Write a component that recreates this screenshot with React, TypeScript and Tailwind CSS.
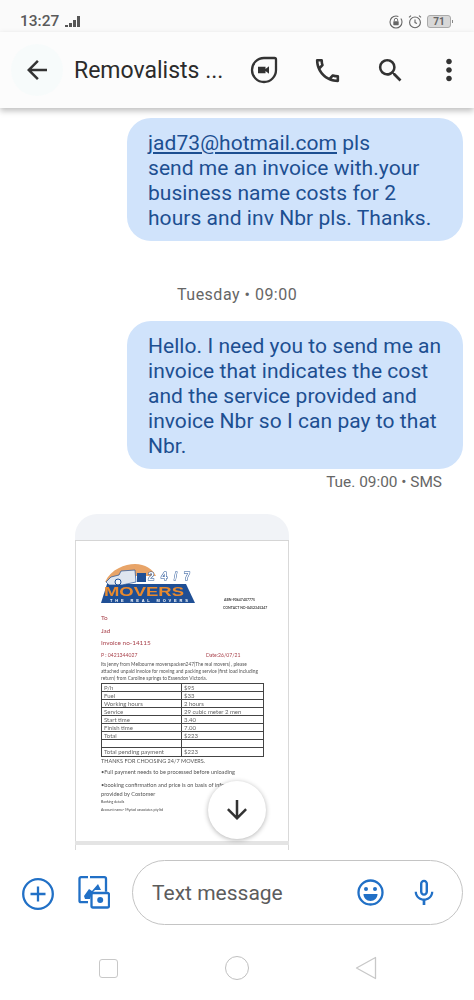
import { MdArrowBack, MdArrowDownward, MdMicNone, MdMoreVert, MdOutlineCall, MdSearch } from 'react-icons/md';

const tableRows = [
  ['P/h', '$95'],
  ['Fuel', '$33'],
  ['Working hours', '2 hours'],
  ['Service', '29 cubic meter 2 men'],
  ['Start time', '3.40'],
  ['Finish time', '7.00'],
  ['Total', '$223'],
  ['', ''],
  ['Total pending payment', '$223'],
];

function StatusBar() {
  return (
    <div className="flex h-[32px] items-end justify-between bg-[#fafafa] pl-[20px] pr-[21px] pb-[1px] text-[#5a5a5a]">
      <div className="flex items-end gap-[6px]">
        <span className="text-[15.500px] leading-[20px] font-medium">13:27</span>
        <div className="mb-[4px] flex items-end gap-[1.500px]">
          <span className="h-[2px] w-[2.500px] bg-[#555]" />
          <span className="h-[4px] w-[2.500px] bg-[#555]" />
          <span className="h-[7px] w-[2.500px] bg-[#555]" />
          <span className="h-[11px] w-[2.500px] bg-[#555]" />
        </div>
      </div>
      <div className="mb-[2px] flex items-center gap-[5px]">
        <svg width="14" height="14" viewBox="0 0 14 14" fill="none">
          <circle cx="7" cy="7" r="6" stroke="#666" strokeWidth="1.1" strokeDasharray="30 3" />
          <rect x="4.3" y="6.2" width="5.4" height="4" rx="0.6" fill="#666" />
          <path d="M5.3 6.2V5a1.7 1.7 0 0 1 3.4 0v1.2" stroke="#666" strokeWidth="0.9" />
        </svg>
        <svg width="14" height="15" viewBox="0 0 14 15" fill="none">
          <circle cx="7" cy="8.4" r="5.4" stroke="#666" strokeWidth="1.1" />
          <path d="M7 5.6v3l2 1M1 3.4 3 1.6M13 3.4l-2-1.8" stroke="#666" strokeWidth="1.1" />
        </svg>
        <div className="flex items-center">
          <div className="flex h-[13px] w-[24px] items-center justify-center rounded-[3px] border border-[#aaa] bg-[#d8d8d8] text-[10px] leading-none font-bold text-[#666]">
            71
          </div>
          <span className="ml-[1px] h-[3px] w-[1px] bg-[#888]" />
        </div>
      </div>
    </div>
  );
}

function Header() {
  return (
    <div className="relative z-10 flex h-[76px] items-center bg-[#fcfcfc] shadow-[0_3px_6px_rgba(0,0,0,0.25)]">
      <div className="ml-[11px] flex h-[52px] w-[52px] items-center justify-center rounded-full bg-[#f7fbfb]">
        <MdArrowBack size={30} color="#333" />
      </div>
      <div className="ml-[11px] mt-[1px] w-[158px] text-[23px] leading-[30px] text-[#2b2b2b]">Removalists ...</div>
      <svg className="ml-[18px]" width="28" height="28" viewBox="0 0 28 28" fill="none">
        <path d="M14 2h10.500A1.500 1.500 0 0 1 26 3.500V14A12 12 0 1 1 14 2z" stroke="#333" strokeWidth="2.300" />
        <path d="M8 10.800h7.500v2.100l3.500-2.600v7.400l-3.500-2.600v2.100H8z" fill="#333" />
      </svg>
      <MdOutlineCall className="ml-[34px]" size={31} color="#333" />
      <MdSearch className="ml-[32px]" size={31} color="#333" />
      <MdMoreVert className="ml-[26px]" size={34} color="#333" />
    </div>
  );
}

function Logo() {
  return (
    <svg width="94" height="40" viewBox="0 0 94 40" className="block">
      <path d="M4 18C10 5 24 0 34 0c10 0 18 5 21 12H30z" fill="#e8a468" />
      <path d="M0 39 6 20h79l9 19z" fill="#1f4f95" />
      <path d="M5 18 10 13l8-2 2-4 14-1 1 12-14 3H8z" fill="#dfe6f0" stroke="#1f4f95" strokeWidth="0.7" />
      <path d="M36 9h9v9h-9z" fill="#1f4f95" />
      <circle cx="17" cy="18" r="3" fill="#f3f6fa" stroke="#1f4f95" />
      <text x="47" y="16" fontFamily="'Liberation Sans', sans-serif" fontWeight="700" fontSize="11" fill="#ffffff" stroke="#1f4f95" strokeWidth="1" paintOrder="stroke" textLength="42">24/7</text>
      <text x="3" y="31.500" fontFamily="'Liberation Sans', sans-serif" fontWeight="700" fontSize="13.500" fill="#e98a2e" textLength="80" lengthAdjust="spacingAndGlyphs">MOVERS</text>
      <text x="9" y="37.800" fontFamily="'Liberation Sans', sans-serif" fontWeight="700" fontSize="4" fill="#ffffff" textLength="78">THE REAL MOVERS</text>
    </svg>
  );
}

function InvoiceDoc() {
  return (
    <div className="h-[300px] overflow-hidden border-x border-[#d9d9d9] bg-white pl-[25px] pt-[23px] font-['Lato','Open_Sans',sans-serif] text-[#555] blur-[0.25px]">
      <div className="flex h-[40px]">
        <Logo />
        <div className="ml-[29px] mt-[32px] shrink-0 text-[3.500px] leading-[8px] font-bold text-[#444]">
          <div>ABN-90647407775</div>
          <div className="-ml-[1px]">CONTACT NO-0452345247</div>
        </div>
      </div>
      <div className="mt-[8px] text-[6.400px] leading-[12.500px] text-[#a8404a]">
        <div>To</div>
        <div>Jad</div>
        <div>Invoice no-14115</div>
        <div className="flex text-[5.100px] leading-[11px]">
          <span className="w-[105px]">P : 0421344027</span>
          <span>Date:26/07/21</span>
        </div>
      </div>
      <div className="w-[162px] text-[4.800px] leading-[7px] text-[#555]">
        Its jenny from Melbourne moverspacken247(The real movers) , please attached unpaid invoice for moving and packing service (first load including return) from Caroline springs to Essendon Victoria.
      </div>
      <div className="mt-[1px] w-[163px] border border-[#444] text-[6px] leading-[7px] text-[#666]">
        {tableRows.map(([label, value], i) => (
          <div key={i} className="flex h-[8.100px] border-b border-[#444] last:border-b-0">
            <div className="w-[80px] border-r border-[#444] pl-[2px]">{label}</div>
            <div className="pl-[2px]">{value}</div>
          </div>
        ))}
      </div>
      <div className="text-[5.500px] leading-[8px]">THANKS FOR CHOOSING 24/7 MOVERS.</div>
      <div className="mt-[3px] text-[5.600px] leading-[8px]">•Full payment needs to be processed before unloading</div>
      <div className="mt-[4px] w-[165px] text-[5.600px] leading-[9px]">•booking confirmation and price is on basis of information provided by Costomer</div>
      <div className="text-[3.500px] leading-[8px] text-[#444]">Banking details</div>
      <div className="text-[3.500px] leading-[8px] text-[#444]">Account name- Myriad associates pty ltd</div>
    </div>
  );
}

function Conversation() {
  return (
    <div className="relative h-[742px] overflow-hidden bg-white font-['Roboto',sans-serif]">
      <div className="ml-[127px] mt-[10px] h-[123px] w-[336px] rounded-[24px] bg-[#d0e3fb] pl-[21px] pt-[13px] text-[21px] leading-[25px] tracking-[0.05px] text-[#1d4f91]">
        <div><a className="underline">jad73@hotmail.com</a> pls</div>
        <div>send me an invoice with.your</div>
        <div>business name costs for 2</div>
        <div>hours and inv Nbr pls. Thanks.</div>
      </div>

      <div className="ml-[177px] mt-[44px] text-[16px] leading-[20px] tracking-[0.5px] text-[#666]">Tuesday • 09:00</div>

      <div className="ml-[127px] mt-[16px] h-[148px] w-[336px] rounded-[24px] bg-[#d0e3fb] pl-[21px] pt-[13px] text-[21px] leading-[25px] tracking-[0.05px] text-[#1d4f91]">
        <div>Hello. I need you to send me an</div>
        <div>invoice that indicates the cost</div>
        <div>and the service provided and</div>
        <div>invoice Nbr so I can pay to that</div>
        <div>Nbr.</div>
      </div>

      <div className="mr-[32px] mt-[3px] text-right text-[15.400px] leading-[20px] text-[#666]">Tue. 09:00 • SMS</div>

      <div className="ml-[75px] mt-[22px] w-[214px]">
        <div className="h-[26px] rounded-t-[22px] bg-[#f1f3f7]" />
        <div className="h-[1px] bg-[#d5d5d5]" />
        <InvoiceDoc />
        <div className="h-[4px] bg-[#e4e4e4]" />
        <div className="h-[6px] border-x border-[#d9d9d9] bg-white" />
      </div>

      <div className="absolute left-[208px] top-[673px] flex h-[58px] w-[58px] items-center justify-center rounded-full bg-white shadow-[0_1px_5px_rgba(0,0,0,0.3)]">
        <MdArrowDownward size={30} color="#333" />
      </div>
    </div>
  );
}

function Composer() {
  return (
    <div className="flex h-[75px] items-start bg-white pt-[10px] font-['Roboto',sans-serif]">
      <svg className="ml-[22px] mt-[18px]" width="32" height="32" viewBox="0 0 32 32" fill="none" stroke="#2170c6" strokeWidth="2.300">
        <circle cx="16" cy="16" r="14.800" />
        <path d="M16 8.500v15M8.500 16h15" />
      </svg>
      <svg className="ml-[24px] mt-[16px]" width="32" height="33" viewBox="0 0 32 33" fill="none">
        <path d="M10 1.200h-7a1.500 1.500 0 0 0-1.500 1.500v22a1.500 1.500 0 0 0 1.500 1.500h7M12 1.200h14.500a1.500 1.500 0 0 1 1.500 1.500v13" stroke="#2170c6" strokeWidth="2.300" />
        <path d="M6 20l5-7 3 2 6-7 3 6h-6l-3 3-2 6H7z" fill="#2170c6" />
        <rect x="13.500" y="17" width="17.500" height="14.500" rx="1.500" fill="#fff" stroke="#2170c6" strokeWidth="2.300" />
        <circle cx="22.200" cy="24" r="3" fill="#2170c6" />
      </svg>
      <div className="ml-[22px] flex h-[65px] w-[331px] items-center rounded-[33px] border border-[#c4c4c4] bg-white pl-[19px]">
        <span className="w-[205px] text-[21px] leading-[28px] text-[#5c5c5c]">Text message</span>
        <svg width="27" height="27" viewBox="0 0 27 27" fill="none">
          <circle cx="13.500" cy="13.500" r="12" stroke="#2170c6" strokeWidth="2.300" />
          <circle cx="9" cy="10" r="2" fill="#2170c6" />
          <circle cx="18" cy="10" r="2" fill="#2170c6" />
          <path d="M6.500 15h14c0 4-3 7-7 7s-7-3-7-7z" fill="#2170c6" />
        </svg>
        <MdMicNone className="ml-[24px]" size={32} color="#2170c6" />
      </div>
    </div>
  );
}

function NavBar() {
  return (
    <div className="flex h-[75px] items-start bg-white pt-[33px]">
      <div className="ml-[99px] mt-[1px] h-[19px] w-[19px] rounded-[3px] border border-[#c8c8c8]" />
      <div className="ml-[107px] -mt-[2px] h-[24px] w-[24px] rounded-full border border-[#c0c0c0]" />
      <svg className="ml-[106px] -mt-[2px]" width="22" height="24" viewBox="0 0 22 24" fill="none">
        <path d="M20.500 1.500v21L1.500 12z" stroke="#c8c8c8" strokeWidth="1.300" strokeLinejoin="round" />
      </svg>
    </div>
  );
}

export default function App() {
  return (
    <div className="h-[1000px] w-[474px] overflow-hidden bg-white font-['Roboto',sans-serif]">
      <StatusBar />
      <Header />
      <Conversation />
      <Composer />
      <NavBar />
    </div>
  );
}
